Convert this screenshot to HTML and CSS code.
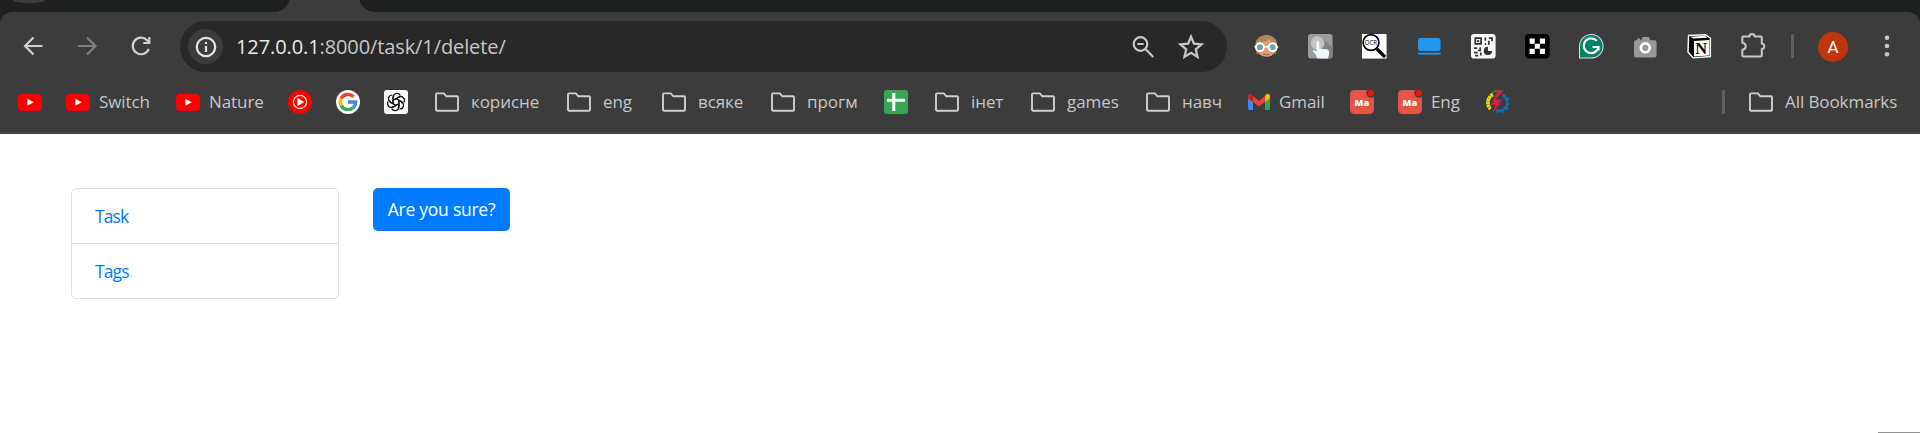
FILE: index.html
```html
<!DOCTYPE html>
<html lang="uk">
<head>
<meta charset="utf-8">
<title>Delete task</title>
<link rel="stylesheet" href="styles.css">
</head>
<body>
<svg class="defs" width="0" height="0">
  <symbol id="folder" viewBox="0 0 24 24"><path d="M1 19.700V4.400q0-1 1-1h6.800l2.600 2.900h10.600q1 0 1 1v12.400q0 1-1 1H2q-1 0-1-1z" fill="none" stroke="#cfcfcf" stroke-width="1.900"/></symbol>
  <symbol id="youtube" viewBox="0 0 24 24"><rect y="4" width="24" height="17" rx="4.200" fill="#f00"/><path d="M9.300 8.700v7l6.500-3.500z" fill="#fff"/></symbol>
</svg>
<header class="browser">
  <div class="tabstrip"><i class="tab-search"></i><i class="tab left"></i><i class="tab active"></i><i class="tab right"></i></div>
  <div class="chrome">
    <nav class="toolbar">
      <svg class="nav" viewBox="0 0 24 24"><path d="M21.500 12H4.500M12.500 3.500 4 12l8.500 8.500" /></svg>
      <svg class="nav dim" viewBox="0 0 24 24"><path d="M3 12h17M12 3.500l8.500 8.500-8.500 8.500"/></svg>
      <svg class="nav" viewBox="0 0 24 24"><path d="M19.800 15a8.300 8.300 0 1 1-1.700-8.800l2 2M20.300 3v6h-6.100"/></svg>
      <div class="omnibox">
        <span class="info"><svg viewBox="0 0 24 24" width="24" height="24"><circle cx="12" cy="12" r="9.200" fill="none" stroke="#e3e3e3" stroke-width="2.300"/><path d="M12 11v6M12 7v2" stroke="#e3e3e3" stroke-width="2.200"/></svg></span>
        <span class="url"><b>127.0.0.1</b>:8000/task/1/delete/</span>
        <svg class="zoom" viewBox="0 0 24 24" width="24" height="24"><circle cx="9.500" cy="9" r="6.800"/><path d="M14.500 14l7.800 8M6.300 9h6.400"/></svg>
        <svg class="star" viewBox="0 0 24 24" width="26" height="26"><path d="M12 2.500l2.700 6.500 7 .6-5.300 4.600 1.600 6.900-6-3.700-6 3.700 1.600-6.900-5.300-4.600 7-.6z"/></svg>
      </div>
      <div class="extensions">
        <svg viewBox="0 0 24 24"><circle cx="12" cy="12" r="10.300" fill="#e29b78"/><path d="M1.500 11C1 5 6 1 12 1s11 4 10.500 10C18 9 16 7 15 5 12 8 7 7 1.500 11z" fill="#a88a5c"/><path d="M1.500 15l1.500 5 2-2zM22.500 15l-1.500 5-2-2z" fill="#a88a5c"/><path d="M.5 12.500h23" stroke="#fff" stroke-width="1.500"/><circle cx="5.800" cy="13" r="3.900" fill="#6fa3b3" stroke="#fff" stroke-width="1.900"/><circle cx="18.200" cy="13" r="3.900" fill="#6fa3b3" stroke="#fff" stroke-width="1.900"/><path d="M9 19.500q3 1.500 6 0" stroke="#a85d47" fill="none"/></svg>
        <svg viewBox="0 0 24 24"><rect width="24" height="24" rx="3" fill="#9c9c9c"/><path d="M12 3l12 10v8q0 3-3 3h-9z" fill="#838383"/><circle cx="9.300" cy="8.800" r="6.700" fill="#c4c4c4"/><path d="M8.300 8.200q0-1.500 1.300-1.500T11 8.200v6l8 1q1.500.3 1.500 2v3l-1 3.800H9l-1.500-4-3-3.200q.5-1.500 2-.8l1.800 1z" fill="#eef6ff"/></svg>
        <svg viewBox="0 0 24 24"><path d="M0 0h24v24H0z" fill="#fff"/><path d="M14.500 14.500l8 8" stroke="#000" stroke-width="3.300"/><circle cx="8.800" cy="8.300" r="7.700" fill="#fff" stroke="#000" stroke-width="1.600"/><text x="2.600" y="10.900" textLength="12" lengthAdjust="spacingAndGlyphs" class="ocr">OCR</text></svg>
        <svg viewBox="0 0 24 24"><rect x="1" y="4" width="22" height="12.500" rx="2.500" fill="#2196f3"/><path d="M1 19.200h22" stroke="#2196f3" stroke-width="1.800"/></svg>
        <svg viewBox="0 0 24 24"><rect width="24" height="24" rx="3" fill="#fafafa"/><g fill="none" stroke="#303030" stroke-width="1.700"><path d="M4.200 4h5.600v5.600H4.200zM14 3.300v3.200M14.800 9.800h-1.500M17.500 4h3v3M17.400 6.500v4M3 13.800h3M7 16h3M3 18.200h3.500M9 13v2M4 21h3M9.500 18v3"/></g><path d="M6 6h2v2H6z" fill="#303030"/><path d="M16.500 12.500v4h4a4 4 0 1 1-4-4z" fill="#303030"/></svg>
        <svg viewBox="0 0 24 24"><rect width="24" height="24" rx="4" fill="#000"/><path d="M4.500 4.500h5v5h-5zM14.500 4.500h5v5h-5zM9.500 9.500h5v5h-5zM4.500 14.500h5v5h-5zM14.500 14.500h5v5h-5z" fill="#fff"/></svg>
        <svg viewBox="0 0 24 24"><path d="M.5 23.500V12A11.500 11.500 0 1 1 12 23.500z" fill="#087f6a" stroke="#d5e5e0"/><path d="M17.300 6.700a7.200 7.200 0 1 0 1.700 6h-5.800M19 12.500V16" stroke="#fff" stroke-width="2.100" fill="none"/></svg>
        <svg viewBox="0 0 24 24"><path d="M2 6h2V4.500h3V6h1l1.500-3h6L17 6h4q2 0 2 2v13q0 2-2 2H3q-2 0-2-2V8q0-2 1-2z" fill="#989898"/><circle cx="12" cy="13.500" r="4.300" fill="#989898" stroke="#fff" stroke-width="2.600"/></svg>
        <svg viewBox="0 0 24 24"><path d="M1.500 1.500L18 .7 22.800 4v18L6 23.300 1 17.500z" fill="#000" stroke="#fff" stroke-width="1.400"/><path d="M6.800 6.800l15-1v15.200l-15 1z" fill="#fff"/><path d="M3.500 2.600l14-.8 2.500 1.800-14 .8z" fill="#fff"/><text x="8" y="19.300" class="notion">N</text></svg>
        <svg viewBox="0 0 24 24"><path d="M1.300 3.500q0-1 1-1h5.700q.3-2.400 2.800-2.400t2.800 2.400h5.700q1 0 1 1v5.700q2.400.3 2.400 2.800t-2.400 2.800v6.200q0 1-1 1h-17q-1 0-1-1v-5.500q3.300-.5 3.300-3.500t-3.300-3.500z" fill="none" stroke="#c7c7c7" stroke-width="2"/></svg>
      </div>
      <i class="sep"></i>
      <span class="avatar">A</span>
      <svg class="dots" viewBox="0 0 8 24" width="8" height="24"><circle cx="4" cy="3.700" r="2.300"/><circle cx="4" cy="12" r="2.300"/><circle cx="4" cy="20.300" r="2.300"/></svg>
    </nav>
    <nav class="bookmarks">
      <a><svg><use href="#youtube"/></svg></a>
      <a><svg><use href="#youtube"/></svg><span>Switch</span></a>
      <a><svg><use href="#youtube"/></svg><span>Nature</span></a>
      <a><svg viewBox="0 0 24 24"><circle cx="12" cy="12" r="12" fill="#f00"/><circle cx="12" cy="12" r="6.600" fill="none" stroke="#fff" stroke-width="1.100"/><path d="M9.300 7.800v8.400l7-4.200z" fill="#fff"/></svg></a>
      <a><svg viewBox="0 0 24 24"><circle cx="12" cy="12" r="12" fill="#fff"/><g fill="none" stroke-width="3.400"><path d="M5.200 8.500A7.600 7.600 0 0 1 17.500 6.800" stroke="#ea4335"/><path d="M5.200 15.500a7.600 7.600 0 0 1 0-7" stroke="#fbbc05"/><path d="M17 17.700A7.600 7.600 0 0 1 5.200 15.500" stroke="#34a853"/><path d="M12 12h7.600q0 3.700-2.600 5.700" stroke="#4285f4"/></g></svg></a>
      <a><svg viewBox="0 0 24 24"><rect width="24" height="24" rx="3" fill="#fff"/><g fill="none" stroke="#111" stroke-width="1.200"><g id="petal"><path d="M9 13.700V7.200a3.900 3.900 0 0 1 7.300-1.800M9.300 10.200l5.200-3a3.900 3.900 0 0 1 2 .1"/></g><use href="#petal" transform="rotate(60 12 12)"/><use href="#petal" transform="rotate(120 12 12)"/><use href="#petal" transform="rotate(180 12 12)"/><use href="#petal" transform="rotate(240 12 12)"/><use href="#petal" transform="rotate(300 12 12)"/></g></svg></a>
      <a class="dir"><svg><use href="#folder"/></svg><span>корисне</span></a>
      <a class="dir"><svg><use href="#folder"/></svg><span>eng</span></a>
      <a class="dir"><svg><use href="#folder"/></svg><span>всяке</span></a>
      <a class="dir"><svg><use href="#folder"/></svg><span>прогм</span></a>
      <a><svg viewBox="0 0 24 24"><rect width="24" height="24" rx="2.500" fill="#34a853"/><path d="M3 10.300h18M9.800 3v18" stroke="#fff" stroke-width="3"/></svg></a>
      <a class="dir"><svg><use href="#folder"/></svg><span>інет</span></a>
      <a class="dir"><svg><use href="#folder"/></svg><span>games</span></a>
      <a class="dir"><svg><use href="#folder"/></svg><span>навч</span></a>
      <a class="mail"><svg viewBox="0 0 24 24"><path d="M1 6v12q0 2 1.500 2H6V9z" fill="#4285f4"/><path d="M23 6v12q0 2-1.500 2H18V9z" fill="#34a853"/><path d="M6 6l6 4.700L18 6v6l-6 4.500L6 12z" fill="#ea4335"/><path d="M1 8.300V6q0-2 2-2.200 1.500 0 3 2.200v6z" fill="#c5221f"/><path d="M23 8.300V6q0-2-2-2.200-1.500 0-3 2.200v6z" fill="#fbbc04"/></svg><span>Gmail</span></a>
      <a><svg viewBox="0 0 24 24"><rect width="24" height="24" rx="4.500" fill="#e45545"/><circle cx="21" cy="3.200" r="4.600" fill="#3c3c3c"/><circle cx="21" cy="3.200" r="3.100" fill="#fa1010"/><text x="4.600" y="16" textLength="14.600" lengthAdjust="spacingAndGlyphs" class="ma-text">Ma</text></svg></a>
      <a><svg viewBox="0 0 24 24"><rect width="24" height="24" rx="4.500" fill="#e45545"/><circle cx="21" cy="3.200" r="4.600" fill="#3c3c3c"/><circle cx="21" cy="3.200" r="3.100" fill="#fa1010"/><text x="4.600" y="16" textLength="14.600" lengthAdjust="spacingAndGlyphs" class="ma-text">Ma</text></svg><span>Eng</span></a>
      <a><svg viewBox="0 0 24 24"><path d="M8 4.500A9 9 0 0 0 5.500 19" fill="none" stroke="#f2dc00" stroke-width="3.600" stroke-dasharray="2.600 .4"/><path d="M7 2.500q4-2.500 9-1" fill="none" stroke="#6f6430" stroke-width="2"/><path d="M17.500 5.500A7.800 7.800 0 0 1 11 20" fill="none" stroke="#0f70b7" stroke-width="2.200"/><path d="M18 5a8.500 8.500 0 0 1-6 16.300" fill="none" stroke="#0f70b7" stroke-width="2.800" stroke-dasharray="2.500 2.500"/><path d="M11 9l4 1 1 3-4 3z" fill="#3f3c86"/><path d="M19 0L10 10l7-.5-4.500 4 2.500 0L7 23.500l3.500-9-5 .5 3-4-1 0 6-10.500z" fill="#e01b45"/></svg></a>
      <i class="sep"></i>
      <a class="dir"><svg><use href="#folder"/></svg><span>All Bookmarks</span></a>
    </nav>
  </div>
</header>
<main class="page">
  <ul class="list"><li><a>Task</a></li><li><a>Tags</a></li></ul>
  <button class="btn">Are you sure?</button>
  <i class="corner"></i>
</main>
</body>
</html>
```
FILE: styles.css
```css
* { box-sizing: border-box; }
body { margin: 0; height: 433px; overflow: hidden; background: #fff; font-family: "Open Sans", "Noto Sans", sans-serif; display: flex; flex-direction: column; }
.defs { position: absolute; }
.browser { height: 134px; background: #1f2120; flex: none; }
.tabstrip { height: 12px; display: flex; }
.tab-search { width: 32px; height: 3px; margin-left: 13px; background: #3c3c3c; border-radius: 0 0 16px 16px / 0 0 3px 3px; }
.tab { height: 12px; }
.tab.left { width: 15px; margin-left: 230px; background: radial-gradient(circle 15px at 0 -3px, transparent 14.500px, #3c3c3c 15px); }
.tab.active { width: 69px; background: #3c3c3c; }
.tab.right { width: 15px; background: radial-gradient(circle 15px at 100% -3px, transparent 14.500px, #3c3c3c 15px); }
.chrome { height: 122px; background: #3c3c3c; border-radius: 12px 12px 0 0; border-bottom: 2px solid #474545; }
.toolbar { height: 68px; padding-top: 9px; display: flex; align-items: flex-start; }
.toolbar > svg, .extensions, .toolbar > .sep, .avatar { margin-top: 13px; flex: none; }
.nav { width: 24px; height: 24px; margin-left: 21px; margin-right: 9px; fill: none; stroke: #d0d0d0; stroke-width: 2.200; }
.nav.dim { stroke: #7d7d7d; }
.omnibox { width: 1047px; height: 51px; margin-left: 18px; padding: 0 23px 0 8px; border-radius: 26px; background: #282828; display: flex; align-items: center; flex: none; }
.info { width: 35px; height: 35px; border-radius: 50%; background: #3c3c3c; display: flex; align-items: center; justify-content: center; }
.url { flex: 1; margin-left: 13px; font-size: 20px; letter-spacing: -.1px; color: #c7c7c7; white-space: nowrap; }
.url b { font-weight: 400; color: #e8e8e8; }
.zoom { margin-right: 23px; fill: none; stroke: #c7c7c7; stroke-width: 2.200; }
.star { fill: none; stroke: #c7c7c7; stroke-width: 2.100; }
.extensions { display: flex; gap: 29.500px; margin-left: 27.300px; }
.extensions svg { width: 24.600px; height: 24.600px; overflow: visible; }
.sep { width: 3px; height: 24px; border-radius: 1px; background: #5f5f5f; }
.toolbar > .sep { margin-left: 25.200px; }
.toolbar > .avatar { width: 30px; height: 30px; margin: 11px 0 0 24px; border-radius: 50%; background: #bf360c; color: #fff; font: 17px/30px Roboto, sans-serif; text-align: center; }
.toolbar > .dots { margin-left: 35px; fill: #c7c7c7; }
.ma-text { font: 800 9.500px "Open Sans", sans-serif; fill: #fff; }
.ocr { font: 7px "Open Sans", sans-serif; fill: #000; }
.notion { font: bold 16px "Liberation Serif", serif; fill: #000; }
.bookmarks { height: 44px; padding-left: 18px; display: grid; grid-template-columns: 48px 110px 112px 48px 48px 51px 132px 95px 109px 113px 51px 96px 115px 101px 103px 48px 87px 237px 27px 160px; align-items: center; }
.bookmarks a { display: flex; align-items: center; gap: 9px; height: 24px; }
.bookmarks a.dir { gap: 12px; }
.bookmarks a.mail { gap: 8px; }
.bookmarks svg { width: 24px; height: 24px; flex: none; }
.bookmarks span { font-size: 17px; line-height: 24px; letter-spacing: -.08px; color: #c7c7c7; white-space: nowrap; }
.page { flex: 1; padding: 54px 0 0 71px; display: flex; align-items: flex-start; position: relative; }
.list { width: 268px; margin: 0; padding: 0; list-style: none; border: 1px solid #dfdfdf; border-radius: 5px; }
.list li { height: 54px; padding: 0 23px; font-size: 17.500px; line-height: 55px; letter-spacing: -.9px; color: #007bff; }
.list li + li { height: 55px; line-height: 54px; border-top: 1px solid #dfdfdf; }
.btn { width: 137px; height: 43px; margin: 0 0 0 34px; padding: 0; border: 0; border-radius: 5px; background: #007bff; color: #fff; font: 17.500px/43px "Open Sans", sans-serif; letter-spacing: -.25px; white-space: nowrap; }
.corner { position: absolute; right: 0; bottom: 0; width: 42px; height: 1px; background: #909090; }
```
